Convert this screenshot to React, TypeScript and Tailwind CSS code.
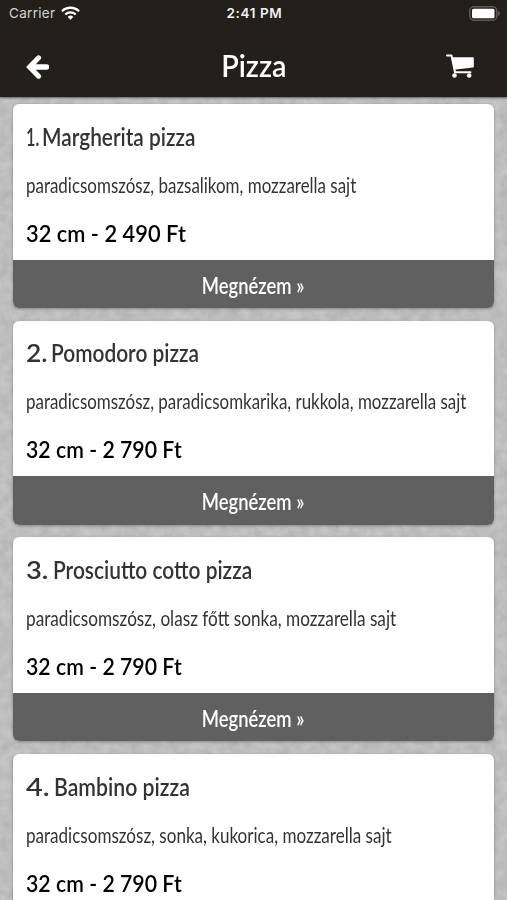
const pizzas = [
  {
    number: "1.",
    numberFit: "w-[16px] scale-x-[0.68]",
    name: "Margherita pizza",
    nameFit: "scale-x-[0.868]",
    toppings: "paradicsomszósz, bazsalikom, mozzarella sajt",
    toppingsFit: "scale-x-[0.77]",
    price: "32 cm - 2 490 Ft",
    priceFit: "scale-x-[0.95]",
  },
  {
    number: "2.",
    numberFit: "w-[25px] scale-x-[1.1]",
    name: "Pomodoro pizza",
    nameFit: "scale-x-[0.87]",
    toppings: "paradicsomszósz, paradicsomkarika, rukkola, mozzarella sajt",
    toppingsFit: "scale-x-[0.769]",
    price: "32 cm - 2 790 Ft",
    priceFit: "scale-x-[0.925]",
  },
  {
    number: "3.",
    numberFit: "w-[27px] scale-x-[1.14]",
    name: "Prosciutto cotto pizza",
    nameFit: "scale-x-[0.871]",
    toppings: "paradicsomszósz, olasz főtt sonka, mozzarella sajt",
    toppingsFit: "scale-x-[0.781]",
    price: "32 cm - 2 790 Ft",
    priceFit: "scale-x-[0.925]",
  },
  {
    number: "4.",
    numberFit: "w-[28px] scale-x-[1.2]",
    name: "Bambino pizza",
    nameFit: "scale-x-[0.885]",
    toppings: "paradicsomszósz, sonka, kukorica, mozzarella sajt",
    toppingsFit: "scale-x-[0.775]",
    price: "32 cm - 2 790 Ft",
    priceFit: "scale-x-[0.925]",
  },
];

function StatusBar() {
  return (
    <div className="grid h-7 grid-cols-3 items-center pl-[9px] pr-[7px] font-[Inter,sans-serif] text-[13.5px] leading-none">
      <div className="flex items-center gap-[6px] text-[#d4d2d0]">
        <span className="tracking-[0.3px]">Carrier</span>
        <svg className="mb-[2px] h-[14px] w-[19px]" viewBox="0 0 19 14" fill="none" stroke="white" strokeWidth="2.3">
          <path d="M1 5.2a12.2 12.2 0 0 1 17 0" />
          <path d="M4.3 8.5a7.4 7.4 0 0 1 10.4 0" />
          <path d="M9.5 13.8 6.7 10.9a4 4 0 0 1 5.6 0z" fill="white" stroke="none" />
        </svg>
      </div>
      <span className="text-center font-semibold tracking-[0.6px] text-[#f1f0ef]">2:41 PM</span>
      <svg className="mb-[2px] h-[15px] w-[31px] justify-self-end" viewBox="0 0 31 15" fill="none">
        <rect x="0.8" y="0.8" width="27" height="13.4" rx="4" stroke="#5d5955" strokeWidth="1.5" />
        <rect x="3" y="2.8" width="22.5" height="9.4" rx="1.5" fill="white" />
        <path d="M29 5v5c1.6-.6 2-1.6 2-2.5S30.6 5.6 29 5z" fill="#5d5955" />
      </svg>
    </div>
  );
}

function BackIcon() {
  return (
    <svg className="h-6 w-[23px]" viewBox="0 0 23 24" fill="none" stroke="white">
      <path d="M20.5 12H5" strokeWidth="5.6" strokeLinecap="round" />
      <path d="M12.6 2.8 3.6 12l9 9.2" strokeWidth="5" strokeLinecap="round" />
    </svg>
  );
}

function CartIcon() {
  return (
    <svg className="h-6 w-7" viewBox="0 0 28 24" fill="white">
      <path d="M1 1.500H5.500L9 18.300H24.500" fill="none" stroke="white" strokeWidth="2" strokeLinecap="round" strokeLinejoin="round" />
      <path d="M5.800 3.200H27a.8.8 0 0 1 .8.8V12.400a1 1 0 0 1-.9 1L8 15.800z" />
      <circle cx="8.500" cy="21.500" r="2.300" />
      <circle cx="23.200" cy="21.500" r="2.300" />
    </svg>
  );
}

function Header() {
  return (
    <header className="h-[97px] bg-[#231f1b] text-white shadow-[0_1px_2px_rgba(0,0,0,0.5)]">
      <StatusBar />
      <div className="grid h-[69px] grid-cols-3 items-center px-[26px]">
        <button aria-label="Vissza" className="mt-[9px] justify-self-start">
          <BackIcon />
        </button>
        <h1 className="scale-x-[0.96] pt-[4px] text-center text-[30px] leading-none font-semibold">Pizza</h1>
        <button aria-label="Kosár" className="mt-[7px] mr-[7px] justify-self-end">
          <CartIcon />
        </button>
      </div>
    </header>
  );
}

// Concrete wall behind the cards
function Backdrop() {
  return (
    <svg className="absolute inset-0 -z-10 h-full w-full" aria-hidden="true">
      <filter id="concrete" x="0" y="0" width="100%" height="100%" colorInterpolationFilters="sRGB">
        <feTurbulence type="fractalNoise" baseFrequency="0.1" numOctaves="5" seed="8" />
        <feColorMatrix values="0.11 0 0 0 0.69  0.11 0 0 0 0.69  0.11 0 0 0 0.69  0 0 0 0 1" />
      </filter>
      <rect width="100%" height="100%" filter="url(#concrete)" />
    </svg>
  );
}

export default function App() {
  return (
    <div className="relative isolate h-[900px] w-[507px] overflow-hidden bg-[#bdbdbd] font-[Lato,sans-serif]">
      <Backdrop />
      <Header />
      <main className="flex flex-col gap-[12.7px] px-[13px] pt-[7px]">
        {pizzas.map((pizza, i) => (
          <article
            key={pizza.number}
            className="h-[204px] shrink-0 overflow-hidden rounded-[6px] bg-white shadow-[0_1px_3px_rgba(0,0,0,0.3)]"
          >
            <div className="flex h-[155.5px] flex-col items-start pt-[8.5px] pl-[13px] whitespace-nowrap">
              <h2 className="flex text-[24px] leading-[48px] font-semibold text-[#333]">
                <span className={`origin-left ${pizza.numberFit}`}>{pizza.number}</span>
                <span className={`origin-left ${pizza.nameFit}`}>{pizza.name}</span>
              </h2>
              <p className={`origin-left text-[22px] leading-[48px] text-[#333] ${pizza.toppingsFit}`}>
                {pizza.toppings}
              </p>
              <p className={`origin-left text-[23px] leading-[48px] font-semibold text-black ${pizza.priceFit}`}>
                {pizza.price}
              </p>
            </div>
            {/* the last card runs off the screen before its button */}
            {i < pizzas.length - 1 && (
              <button className="flex h-[48.5px] w-full items-center justify-center bg-[#606060] pt-[2px] text-[23px] font-semibold text-white">
                <span className="scale-x-[0.8]">Megnézem »</span>
              </button>
            )}
          </article>
        ))}
      </main>
    </div>
  );
}
